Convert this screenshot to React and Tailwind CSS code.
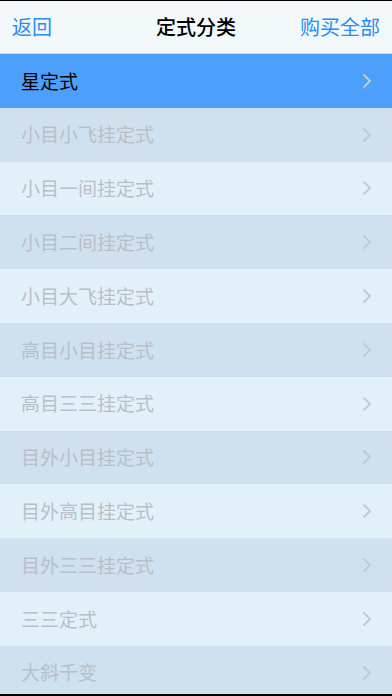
const items = [
  "星定式",
  "小目小飞挂定式",
  "小目一间挂定式",
  "小目二间挂定式",
  "小目大飞挂定式",
  "高目小目挂定式",
  "高目三三挂定式",
  "目外小目挂定式",
  "目外高目挂定式",
  "目外三三挂定式",
  "三三定式",
  "大斜千变",
];

function Chevron({ className }) {
  return (
    <svg width="10" height="16" viewBox="0 0 10 16" className={className}>
      <path d="M1.5 1.5 L8 8 L1.5 14.5" fill="none" stroke="currentColor" strokeWidth="1.8" />
    </svg>
  );
}

export default function App() {
  return (
    <div
      className="h-[696px] w-[392px] overflow-hidden bg-black pt-px pb-[2px]"
      style={{ fontFamily: '"Noto Sans CJK SC", "Noto Sans", sans-serif' }}
    >
      <div className="flex h-full flex-col overflow-hidden">
        <div className="grid h-[52px] shrink-0 grid-cols-[1fr_auto_1fr] items-center bg-[#f2f7f9] px-3 text-[20px]">
          <span className="text-[#2a8df4]">返回</span>
          <span className="font-medium text-black">定式分类</span>
          <span className="text-right text-[#2a8df4]">购买全部</span>
        </div>
        <div className="h-px shrink-0 bg-[#d6dadd]" />
        {items.map((name, i) => {
          const active = i === 0;
          const bg = active ? "bg-[#4c9ffb]" : i % 2 === 1 ? "bg-[#cfe0ef]" : "bg-[#e2f1f9]";
          return (
            <div
              key={name}
              className={`flex h-[53.8px] shrink-0 items-center justify-between pl-[21px] pr-[20px] ${bg}`}
            >
              <span className={`text-[19px] ${active ? "text-black" : "text-[#b9bfc5]"}`}>{name}</span>
              <Chevron className={active ? "text-[#c8cdd2]" : "text-[#c4c8cc]"} />
            </div>
          );
        })}
      </div>
    </div>
  );
}
